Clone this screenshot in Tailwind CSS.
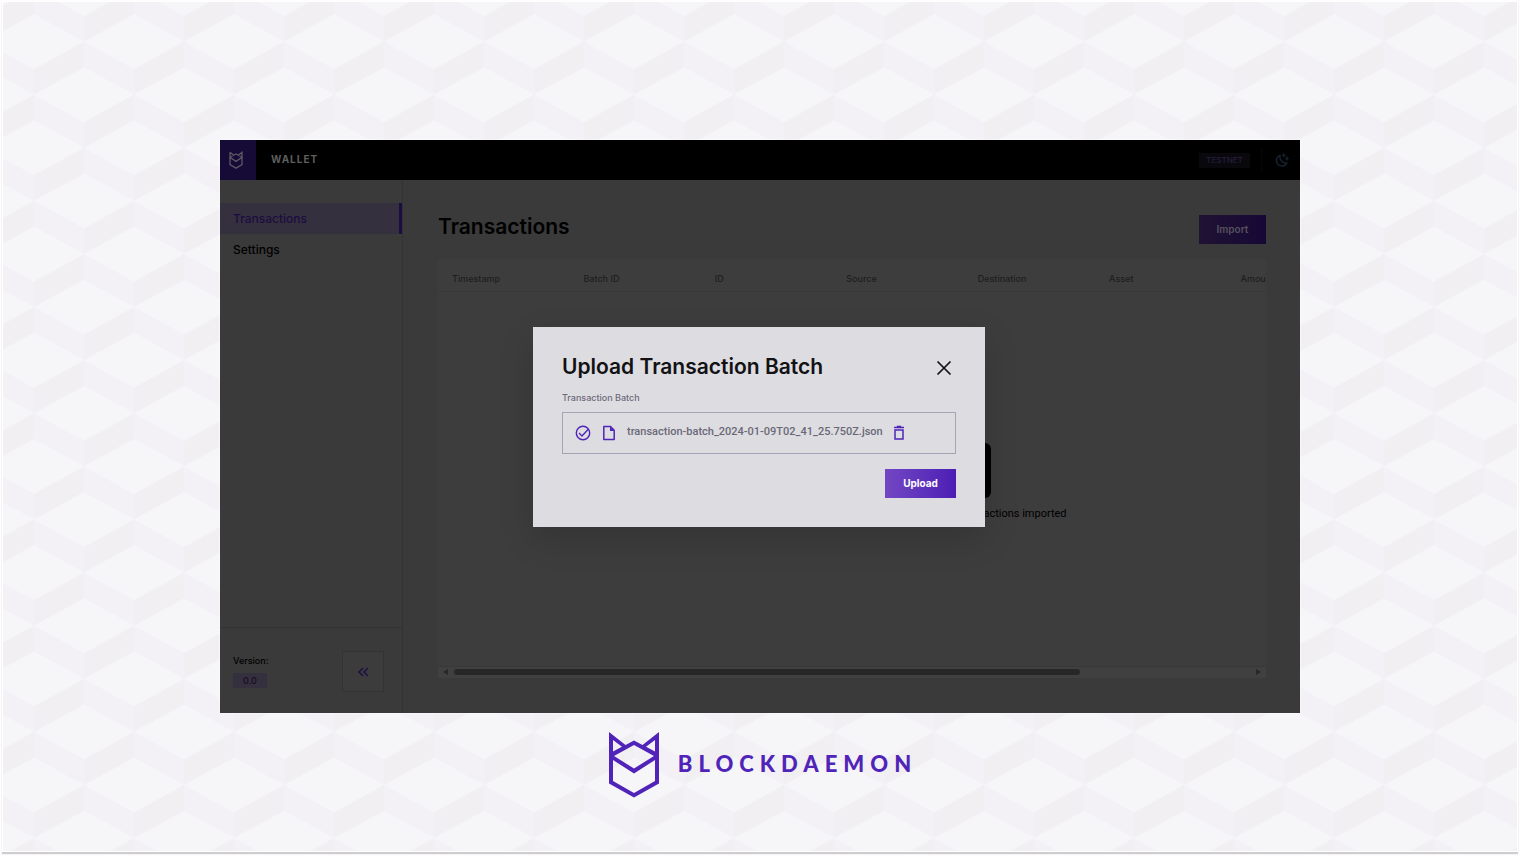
<!DOCTYPE html>
<html lang="en">

<head>
    <meta charset="UTF-8">
    <meta name="viewport" content="width=device-width, initial-scale=1.0">
    <script src="https://cdn.jsdelivr.net/npm/@tailwindcss/browser@4"></script>
    <title>Blockdaemon Wallet</title>
</head>

<body class="min-h-screen bg-[#fdfdfd] px-0.5 pt-px pb-1 flex font-['Inter',sans-serif]">

    <div class="relative flex-1 flex flex-col items-center border border-white bg-[#f6f6f9] shadow-[0_2px_1px_#cdcdcf] pt-[138px] pb-8 px-4">

        <!-- cube background -->
        <svg class="absolute inset-0 w-full h-full" aria-hidden="true">
            <defs>
                <pattern id="cubes" x="81" y="39.5" width="100" height="106.2" patternUnits="userSpaceOnUse">
                    <path fill="#f3f1f6" d="M0 0L50 27.5V53.1L0 26zM50 53.1L100 80.6V106.2L50 79z" />
                    <path fill="#f1eff2" d="M50 27.5L100 0V26L50 53.1zM0 80.6L50 53.1V79L0 106.2z" />
                </pattern>
            </defs>
            <rect width="100%" height="100%" fill="url(#cubes)" />
        </svg>

        <div class="relative w-full max-w-[1080px] min-h-[573px] flex flex-col bg-[#3a3a3a] text-black shadow-[0_0_2px_#ffffff]">

            <header class="h-10 bg-black flex items-center">
                <a href="#" aria-label="Blockdaemon" class="w-9 h-10 bg-[#160a36] flex items-center justify-center pr-1">
                    <svg class="w-3.5 h-[18px]" viewBox="0 0 50 66" fill="none" stroke="#5a5564" stroke-width="5">
                        <path d="M3 5V50L25 63L47 50V5L33 16M3 5L17 16M3 23L25 11L47 23L25 38z" />
                    </svg>
                </a>
                <span class="ml-[15px] pb-0.5 text-[10px] font-bold tracking-widest text-[#5e5e5e]">WALLET</span>
                <span class="ml-auto w-[51px] h-[15px] bg-[#09080c] text-[#241b36] text-[8px] font-semibold flex items-center justify-center">TESTNET</span>
                <span class="ml-[11px] w-px h-6 bg-[#070707]"></span>
                <button type="button" aria-label="Dark mode" class="ml-[13px] mr-[11px]">
                    <svg class="w-3.5 h-3.5" viewBox="0 0 24 24" fill="none" stroke="#172330" stroke-width="2.500" stroke-linecap="round" stroke-linejoin="round">
                        <path d="M8.500 4A9.500 9.500 0 1 0 20.500 17A11 11 0 0 1 8.500 4z" />
                        <path fill="#172330" stroke-width="1" d="M15 1l1 2 2 1-2 1-1 2-1-2-2-1 2-1zM20.500 6l1 2.500 2.500 1-2.500 1-1 2.500-1-2.500-2.500-1 2.500-1z" />
                    </svg>
                </button>
            </header>

            <div class="flex-1 flex">

                <!-- sidebar -->
                <aside class="w-[183px] shrink-0 border-r border-[#333333] flex flex-col">
                    <nav class="pt-[23px] flex flex-col text-xs font-medium">
                        <a href="#" class="h-[31px] pl-[13px] flex items-center bg-[#35303d] text-[#1c0d42] border-r-3 border-[#1b0c42]">Transactions</a>
                        <a href="#" class="h-8 pl-[13px] flex items-center">Settings</a>
                    </nav>
                    <div class="mt-auto h-[86px] border-t border-[#333333] pt-0.5 pl-[13px] pr-[18px] flex items-center justify-between">
                        <div class="flex flex-col gap-1.5 text-[9px] leading-3 font-medium">
                            <span>Version:</span>
                            <span class="w-[34px] h-[15px] bg-[#35303d] text-[#140b28] flex items-center justify-center">0.0</span>
                        </div>
                        <button type="button" aria-label="Collapse menu" class="w-[42px] h-[41px] border border-[#333333] bg-[#3c3c3c] flex items-center justify-center">
                            <svg class="w-3 h-3" viewBox="0 0 12 12" fill="none" stroke="#1d0e44" stroke-width="1.500">
                                <path d="M6 2L2 6L6 10M11 2L7 6L11 10" />
                            </svg>
                        </button>
                    </div>
                </aside>

                <!-- transactions -->
                <main class="flex-1 min-w-0 pl-[35px] pr-[34px] pt-[35px] pb-[35px] flex flex-col">
                    <div class="flex items-start justify-between">
                        <h1 class="text-[21px] leading-6 font-semibold">Transactions</h1>
                        <button type="button" class="w-[67px] h-[29px] bg-linear-to-r from-[#201233] to-[#160835] text-[#56525e] text-[10px] font-semibold">Import</button>
                    </div>

                    <div class="mt-[15px] flex-1 overflow-hidden bg-[#3d3d3d] flex flex-col">
                        <table class="w-[920px] table-fixed text-[9px] text-[#1d1d20]">
                            <thead>
                                <tr class="h-8 border-b border-[#383838]">
                                    <th class="pl-3.5 pt-2 text-left font-medium">Timestamp</th>
                                    <th class="pl-3.5 pt-2 text-left font-medium">Batch ID</th>
                                    <th class="pl-3.5 pt-2 text-left font-medium">ID</th>
                                    <th class="pl-3.5 pt-2 text-left font-medium">Source</th>
                                    <th class="pl-3.5 pt-2 text-left font-medium">Destination</th>
                                    <th class="pl-3.5 pt-2 text-left font-medium">Asset</th>
                                    <th class="pl-3.5 pt-2 text-left font-medium">Amount</th>
                                </tr>
                            </thead>
                        </table>
                        <div class="w-[1051px] flex-1 pt-2 flex flex-col items-center justify-center gap-2">
                            <div class="w-[55px] h-[55px] rounded-md bg-black"></div>
                            <p class="text-[11px] leading-4 font-['Roboto',sans-serif]">There have been no transactions imported</p>
                        </div>
                    </div>
                    <div class="h-3 border-t border-[#383838] bg-[#404040] px-1 pb-0.5 flex items-center justify-between">
                        <svg class="w-2 h-2" viewBox="0 0 8 8" fill="#272727"><path d="M6 1V7L1 4z" /></svg>
                        <div class="flex-1 ml-1 mr-2">
                            <div class="w-[79%] h-1.5 rounded-full bg-[#272727]"></div>
                        </div>
                        <svg class="w-2 h-2" viewBox="0 0 8 8" fill="#272727"><path d="M2 1V7L7 4z" /></svg>
                    </div>
                </main>
            </div>

            <!-- upload modal -->
            <div class="absolute inset-0 pr-0.5 flex items-center justify-center">
                <form role="dialog" aria-labelledby="modal-title" class="w-[452px] p-[29px] bg-[#dddce1] shadow-[0_12px_32px_rgba(0,0,0,0.15)]">
                    <div class="h-6 flex items-center justify-between">
                        <h2 id="modal-title" class="pb-0.5 text-[21px] leading-5 font-semibold text-[#121214]">Upload Transaction Batch</h2>
                        <button type="button" aria-label="Close" class="mr-1">
                            <svg class="w-4 h-4" viewBox="0 0 16 16" fill="none" stroke="#121214" stroke-width="1.700">
                                <path d="M1.500 1.500L14.500 14.500M14.500 1.500L1.500 14.500" />
                            </svg>
                        </button>
                    </div>
                    <p class="mt-3 text-[9px] leading-3 font-medium text-[#6c6a7a]">Transaction Batch</p>
                    <div class="mt-2 h-[42px] border border-[#a5a3b5] px-3 flex items-center text-[#5024b8]">
                        <svg class="w-4 h-4" viewBox="0 0 16 16" fill="none" stroke="currentColor" stroke-width="1.400">
                            <circle cx="8" cy="8" r="6.700" />
                            <path d="M4 8L7 11L13 4.500" />
                        </svg>
                        <svg class="ml-2.5 w-4 h-4" viewBox="0 0 16 16" fill="none" stroke="currentColor" stroke-width="1.500" stroke-linejoin="round">
                            <path d="M2.800 1.500H9.500L13.200 5.200V14.500H2.800z" />
                            <path fill="currentColor" stroke="none" d="M9 1.500V6H13.500z" />
                        </svg>
                        <span class="ml-2.5 text-[11px] font-medium text-[#6a6877] font-['Roboto',sans-serif]">transaction-batch_2024-01-09T02_41_25.750Z.json</span>
                        <button type="button" aria-label="Remove file" class="ml-2">
                            <svg class="w-4 h-4" viewBox="0 0 16 16" fill="none" stroke="currentColor" stroke-width="1.500">
                                <path d="M3 2.500H13M5.800 1.500H10.200" />
                                <path d="M4 5V14H12V5z" />
                            </svg>
                        </button>
                    </div>
                    <div class="mt-[15px] flex justify-end">
                        <button type="submit" class="w-[71px] h-[29px] bg-linear-to-r from-[#7446c4] to-[#4c1cb4] text-white text-[10px] font-bold">Upload</button>
                    </div>
                </form>
            </div>
        </div>

        <!-- logo -->
        <div class="relative mt-[19px] flex items-center gap-[19px] text-[#5024b8]">
            <svg class="w-[50px] h-[66px]" viewBox="0 0 50 66" fill="currentColor" aria-hidden="true">
                <path fill-rule="evenodd" d="M0 0L16.500 13L25 8.500L33.500 13L50 0V51.500L25 65.500L0 51.500zM4 8V19.500L13 14.800zM46 8V19.500L37 14.800zM25 13L5 24L25 36.500L45 24zM4 28V49L25 61L46 49V28L25 41.500z" />
            </svg>
            <span class="-mr-1.5 pb-0.5 text-[22px] leading-7 font-black tracking-[6px] font-['Lato',sans-serif]">BLOCKDAEMON</span>
        </div>
    </div>

</body>

</html>
